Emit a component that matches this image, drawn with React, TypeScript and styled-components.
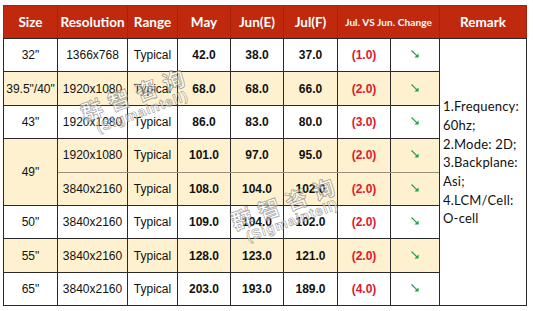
import React from 'react'
import styled, { createGlobalStyle } from 'styled-components'

const GlobalStyle = createGlobalStyle`
    html, body {
        margin: 0;
        padding: 0;
        background: #fff;
    }
`

const Page = styled.div`
    position: relative;
    width: 533px;
    height: 311px;
    box-sizing: border-box;
    padding: 5px 0 0 3px;
    overflow: hidden;
`

const Table = styled.table`
    border-collapse: collapse;
    table-layout: fixed;
    width: 523px;
`

const HeadRow = styled.tr`
    height: 33px;
`

const HeadCell = styled.th<{ $small?: boolean }>`
    background: #c0290e;
    color: #fff;
    font-family: 'Lato', 'Open Sans', sans-serif;
    font-weight: 700;
    font-size: ${(p) => (p.$small ? '10px' : '13.5px')};
    letter-spacing: ${(p) => (p.$small ? '0.1px' : '0')};
    border: 1px solid #a8220b;
    border-bottom-color: #2a2a2a;
    padding: 0;
    text-align: center;
    white-space: nowrap;
    overflow: hidden;
`

const Row = styled.tr<{ $cream?: boolean }>`
    height: 33.4px;
    background: ${(p) => (p.$cream ? '#fdf1cf' : '#fff')};
`

const Cell = styled.td<{ $bold?: boolean; $red?: boolean; $soft?: boolean }>`
    font-family: 'Liberation Sans', Arial, sans-serif;
    font-size: 12px;
    font-weight: ${(p) => (p.$bold || p.$red ? 700 : 400)};
    color: ${(p) => (p.$red ? '#e0182d' : '#111')};
    border: 1px solid #2a2a2a;
    border-bottom-color: ${(p) => (p.$soft ? '#9a8f78' : '#2a2a2a')};
    text-align: center;
    padding: 0;
    white-space: nowrap;
`

const RemarkCell = styled.td`
    background: #fff;
    border: 1px solid #2a2a2a;
    font-family: 'Lato', 'Open Sans', sans-serif;
    font-size: 13px;
    letter-spacing: 0.2px;
    line-height: 18.7px;
    color: #111;
    text-align: left;
    vertical-align: middle;
    padding: 0 0 0 3px;
`

const RemarkLine = styled.div`
    white-space: nowrap;
`

const Watermark = styled.div<{ $x: number; $y: number }>`
    position: absolute;
    left: ${(p) => p.$x}px;
    top: ${(p) => p.$y}px;
    transform: translate(-50%, -50%) rotate(-20deg);
    display: flex;
    flex-direction: column;
    align-items: center;
    pointer-events: none;
`

const MarkCn = styled.span`
    font-family: 'Noto Sans CJK SC', sans-serif;
    font-weight: 700;
    font-size: 22px;
    line-height: 24px;
    letter-spacing: 7px;
    color: rgba(255, 255, 255, 0.5);
    -webkit-text-stroke: 0.7px rgba(110, 110, 110, 0.7);
`

const MarkEn = styled.span`
    font-family: 'Liberation Sans', sans-serif;
    font-weight: 700;
    font-size: 14px;
    line-height: 16px;
    letter-spacing: 1px;
    color: rgba(255, 255, 255, 0.5);
    -webkit-text-stroke: 0.6px rgba(110, 110, 110, 0.7);
`

const Arrow = () => (
    <svg width="10" height="10" viewBox="0 0 10 10">
        <path d="M1.5 1.5 L7.2 7.2" stroke="#22a04e" strokeWidth="1.2" />
        <path d="M8.6 4.4 L8.6 8.6 L4.4 8.6 Z" fill="#22a04e" />
    </svg>
)

const widths = [54, 70, 50, 53, 53, 54, 53, 49, 87]

const rows = [
    { size: '32"', res: '1366x768', may: '42.0', jun: '38.0', jul: '37.0', diff: '(1.0)', cream: false },
    { size: '39.5"/40"', res: '1920x1080', may: '68.0', jun: '68.0', jul: '66.0', diff: '(2.0)', cream: true },
    { size: '43"', res: '1920x1080', may: '86.0', jun: '83.0', jul: '80.0', diff: '(3.0)', cream: false },
    { size: '49"', res: '1920x1080', may: '101.0', jun: '97.0', jul: '95.0', diff: '(2.0)', cream: true, span: 2 },
    { size: '', res: '3840x2160', may: '108.0', jun: '104.0', jul: '102.0', diff: '(2.0)', cream: true },
    { size: '50"', res: '3840x2160', may: '109.0', jun: '104.0', jul: '102.0', diff: '(2.0)', cream: false },
    { size: '55"', res: '3840x2160', may: '128.0', jun: '123.0', jul: '121.0', diff: '(2.0)', cream: true },
    { size: '65"', res: '3840x2160', may: '203.0', jun: '193.0', jul: '189.0', diff: '(4.0)', cream: false },
]

const remarks = ['1.Frequency:', '60hz;', '2.Mode: 2D;', '3.Backplane:', 'Asi;', '4.LCM/Cell:', 'O-cell', '\u00a0']

export default function App() {
    return (
        <Page>
            <GlobalStyle />
            <Table>
                <colgroup>
                    {widths.map((w, i) => (
                        <col key={i} style={{ width: w }} />
                    ))}
                </colgroup>
                <thead>
                    <HeadRow>
                        <HeadCell>Size</HeadCell>
                        <HeadCell>Resolution</HeadCell>
                        <HeadCell>Range</HeadCell>
                        <HeadCell>May</HeadCell>
                        <HeadCell>Jun(E)</HeadCell>
                        <HeadCell>Jul(F)</HeadCell>
                        <HeadCell $small colSpan={2}>Jul. VS Jun. Change</HeadCell>
                        <HeadCell>Remark</HeadCell>
                    </HeadRow>
                </thead>
                <tbody>
                    {rows.map((r, i) => (
                        <Row key={i} $cream={r.cream}>
                            {r.span ? <Cell rowSpan={r.span}>{r.size}</Cell> : r.size && <Cell>{r.size}</Cell>}
                            <Cell $soft={!!r.span}>{r.res}</Cell>
                            <Cell $soft={!!r.span}>Typical</Cell>
                            <Cell $soft={!!r.span} $bold>{r.may}</Cell>
                            <Cell $soft={!!r.span} $bold>{r.jun}</Cell>
                            <Cell $soft={!!r.span} $bold>{r.jul}</Cell>
                            <Cell $soft={!!r.span} $red>{r.diff}</Cell>
                            <Cell $soft={!!r.span}>
                                <Arrow />
                            </Cell>
                            {i === 0 && (
                                <RemarkCell rowSpan={rows.length}>
                                    {remarks.map((t, k) => (
                                        <RemarkLine key={k}>{t}</RemarkLine>
                                    ))}
                                </RemarkCell>
                            )}
                        </Row>
                    ))}
                </tbody>
            </Table>
            <Watermark $x={138} $y={100}>
                <MarkCn>群智咨询</MarkCn>
                <MarkEn>(Sigmaintell)</MarkEn>
            </Watermark>
            <Watermark $x={288} $y={209}>
                <MarkCn>群智咨询</MarkCn>
                <MarkEn>(Sigmaintell)</MarkEn>
            </Watermark>
        </Page>
    )
}
